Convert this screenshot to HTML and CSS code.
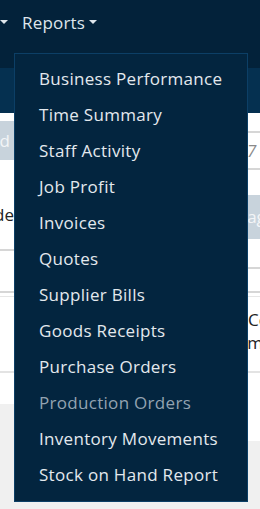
FILE: index.html
```html
<!DOCTYPE html>
<html lang="en">
<head>
    <meta charset="UTF-8">
    <meta name="viewport" content="width=device-width, initial-scale=1.0">
    <title>Reports</title>
    <link rel="stylesheet" href="styles.css">
</head>
<body>
    <header class="topbar">
        <nav class="nav">
            <a href="#" class="nav-item"><span class="caret"></span></a>
            <a href="#" class="nav-item open">Reports <span class="caret"></span></a>
        </nav>
    </header>
    <div class="subbar"></div>

    <main class="content">
        <div class="col col-left">
            <div class="btn-gray">Add</div>
            <div class="label">Code</div>
            <div class="rule"></div>
            <div class="rule rule-b"></div>
            <div class="rule-light"></div>
            <div class="rule-thick"></div>
            <div class="footer-gray"></div>
        </div>
        <div class="col col-right">
            <div class="rule"></div>
            <div class="cell italic">7</div>
            <div class="rule"></div>
            <div class="btn-gray">Manage</div>
            <div class="rule rule-c"></div>
            <div class="rule rule-d"></div>
            <div class="rule-light"></div>
            <div class="cell-wrap">Cost<br><span class="shift">Number</span></div>
            <div class="rule-thick"></div>
            <div class="footer-gray"></div>
        </div>
    </main>

    <ul class="dropdown">
        <li><a href="#">Business Performance</a></li>
        <li><a href="#">Time Summary</a></li>
        <li><a href="#">Staff Activity</a></li>
        <li><a href="#">Job Profit</a></li>
        <li><a href="#">Invoices</a></li>
        <li><a href="#">Quotes</a></li>
        <li><a href="#">Supplier Bills</a></li>
        <li><a href="#">Goods Receipts</a></li>
        <li><a href="#">Purchase Orders</a></li>
        <li><a href="#" class="disabled">Production Orders</a></li>
        <li><a href="#">Inventory Movements</a></li>
        <li><a href="#">Stock on Hand Report</a></li>
    </ul>
</body>
</html>
```

FILE: styles.css
```css
* {
    box-sizing: border-box;
}

html, body {
    margin: 0;
    height: 100%;
}

body {
    position: relative;
    font-family: "Open Sans", "Noto Sans", sans-serif;
    font-size: 17px;
    color: #222;
    background-color: #fff;
    overflow: hidden;
}

/* top navigation */

.topbar {
    height: 68px;
    background-color: #03223a;
}

.nav {
    display: flex;
    align-items: center;
    height: 44px;
}

.nav-item {
    display: flex;
    align-items: center;
    gap: 4px;
    color: #dfe6ec;
    text-decoration: none;
    letter-spacing: 0.2px;
}

.nav-item:first-child {
    width: 22px;
    padding-left: 0;
}

.caret {
    display: inline-block;
    width: 0;
    height: 0;
    border-left: 4px solid transparent;
    border-right: 4px solid transparent;
    border-top: 4px solid #dfe6ec;
}

.subbar {
    height: 45px;
    background-color: #053050;
}

/* page behind the menu */

.content {
    display: grid;
    grid-template-columns: 130px 1fr;
    height: calc(100% - 113px);
}

.col {
    display: flex;
    flex-direction: column;
    overflow: hidden;
}

.rule {
    flex-shrink: 0;
    height: 2px;
    background-color: #d6d6d6;
}

.rule-light {
    flex-shrink: 0;
    height: 1px;
    margin-top: 3px;
    background-color: #e6e6e6;
}

.rule-thick {
    flex-shrink: 0;
    height: 2px;
    background-color: #e3e3e3;
}

.footer-gray {
    flex: 1;
    background-color: #f0f0f0;
}

.btn-gray {
    flex-shrink: 0;
    background-color: #c8d3dc;
    color: #f3f5f7;
}

.col-left .btn-gray,
.col-left .label {
    direction: rtl;
    white-space: nowrap;
}

.col-left .btn-gray {
    width: 60px;
    height: 39px;
    margin-top: 8px;
    line-height: 39px;
    padding-right: 50px;
}

.col-left .label {
    width: 30px;
    height: 89px;
    padding-top: 44px;
    line-height: 22px;
    padding-right: 16px;
}

.col-left .rule-b {
    margin-top: 40px;
}

.col-left .rule-thick {
    margin-top: 74px;
}

.col-left .footer-gray {
    margin-top: 31px;
}

.col-right > .rule:first-child {
    margin-top: 18px;
}

.cell {
    flex-shrink: 0;
    height: 35px;
    line-height: 35px;
    padding-left: 117px;
}

.italic {
    font-style: italic;
    color: #8a8a8a;
}

.col-right .btn-gray {
    height: 44px;
    margin-top: 25px;
    line-height: 44px;
    padding-left: 82px;
    white-space: nowrap;
}

.col-right .rule-c {
    margin-top: 28px;
}

.col-right .rule-d {
    margin-top: 22px;
}

.cell-wrap {
    flex-shrink: 0;
    padding: 11px 0 0 118px;
    line-height: 23px;
    white-space: nowrap;
}

.shift {
    margin-left: -24px;
}

.col-right .rule-thick {
    margin-top: 17px;
}

.col-right .footer-gray {
    margin-top: 68px;
}

/* reports menu */

.dropdown {
    position: absolute;
    top: 53px;
    left: 14px;
    width: 234px;
    margin: 0;
    padding: 7px 0 8px;
    list-style: none;
    background-color: #03253f;
    border: 1px solid #0c3f66;
}

.dropdown a {
    display: block;
    height: 36px;
    line-height: 36px;
    padding-left: 24px;
    color: #e3e9ee;
    text-decoration: none;
    letter-spacing: 0.3px;
    white-space: nowrap;
}

.dropdown a.disabled {
    color: #93a3b1;
}
```
